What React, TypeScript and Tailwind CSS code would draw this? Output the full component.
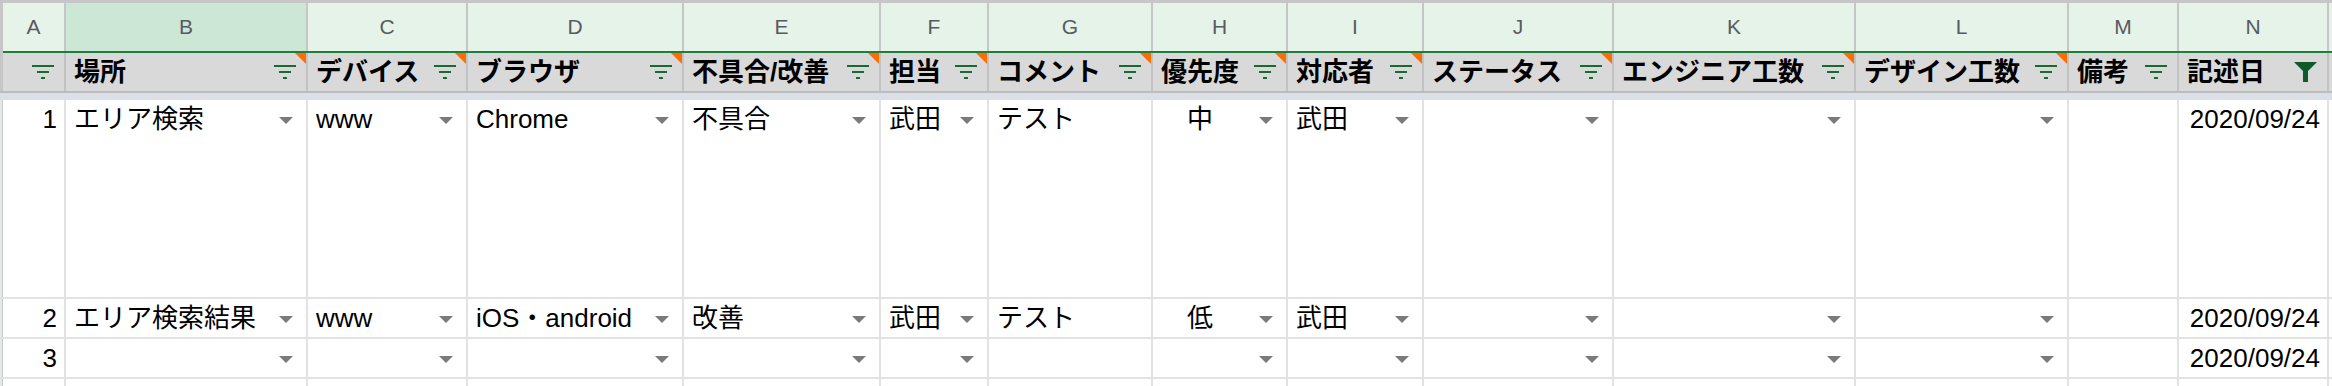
import React from "react";

type Col = { letter: string; w: string; head: string; flag: boolean };

const COLS: Col[] = [
  { letter: "A", w: "w-[63px]", head: "", flag: false },
  { letter: "B", w: "w-[242px]", head: "場所", flag: true },
  { letter: "C", w: "w-[160px]", head: "デバイス", flag: true },
  { letter: "D", w: "w-[216px]", head: "ブラウザ", flag: true },
  { letter: "E", w: "w-[197px]", head: "不具合/改善", flag: true },
  { letter: "F", w: "w-[108px]", head: "担当", flag: true },
  { letter: "G", w: "w-[164px]", head: "コメント", flag: true },
  { letter: "H", w: "w-[135px]", head: "優先度", flag: true },
  { letter: "I", w: "w-[136px]", head: "対応者", flag: true },
  { letter: "J", w: "w-[190px]", head: "ステータス", flag: true },
  { letter: "K", w: "w-[242px]", head: "エンジニア工数", flag: true },
  { letter: "L", w: "w-[213px]", head: "デザイン工数", flag: true },
  { letter: "M", w: "w-[110px]", head: "備考", flag: false },
  { letter: "N", w: "w-[150px]", head: "記述日", flag: false },
  { letter: "", w: "w-[200px]", head: "", flag: false },
];

const ARROW_COLS = new Set(["B", "C", "D", "E", "F", "H", "I", "J", "K", "L"]);

type RowData = { h: string; cells: Record<string, string> };

const ROWS: RowData[] = [
  {
    h: "h-[199px]",
    cells: { A: "1", B: "エリア検索", C: "www", D: "Chrome", E: "不具合", F: "武田", G: "テスト", H: "中", I: "武田", N: "2020/09/24" },
  },
  {
    h: "h-[40px]",
    cells: { A: "2", B: "エリア検索結果", C: "www", D: "iOS・android", E: "改善", F: "武田", G: "テスト", H: "低", I: "武田", N: "2020/09/24" },
  },
  { h: "h-[40px]", cells: { A: "3", N: "2020/09/24" } },
  { h: "h-[40px]", cells: { A: "4", N: "2020/09/24" } },
];

function FilterIcon() {
  return (
    <svg width="22" height="14" viewBox="0 0 22 14" className="shrink-0">
      <rect x="0" y="0" width="22" height="2" fill="#146c2e" />
      <rect x="5" y="6" width="12" height="2" fill="#146c2e" />
      <rect x="9" y="12" width="4" height="2" fill="#146c2e" />
    </svg>
  );
}

function FunnelIcon() {
  return (
    <svg width="23" height="20" viewBox="0 0 23 20" className="shrink-0">
      <path d="M0 0 H23 L14 9 V20 H9 V9 Z" fill="#0f5a29" />
    </svg>
  );
}

function Arrow() {
  return (
    <svg width="14" height="7" viewBox="0 0 14 7" className="shrink-0 mt-[2px]">
      <polygon points="0,0 14,0 7,7" fill="#7a7a7a" />
    </svg>
  );
}

function DataCell({ col, text }: { col: Col; text?: string }) {
  const arrow = ARROW_COLS.has(col.letter);
  const right = col.letter === "A" || col.letter === "N";
  const center = col.letter === "H";
  return (
    <div className={`${col.w} shrink-0 h-full border-r-2 border-[#e2e2e2]`}>
      <div className={`h-[38px] flex items-center ${right ? "pl-[6px] pr-[7px]" : "pl-[8px] pr-[13px]"}`}>
        <span
          className={`flex-1 whitespace-nowrap overflow-hidden text-[26px] leading-[30px] text-black ${
            right ? "text-right" : center ? "text-center pr-[20px]" : "text-left"
          }`}
        >
          {text ?? ""}
        </span>
        {arrow && <Arrow />}
      </div>
    </div>
  );
}

export default function App() {
  return (
    <div className="w-[2332px] h-[386px] overflow-hidden bg-white font-['Liberation_Sans','Noto_Sans_CJK_JP',sans-serif]">
      <div className="h-[3px] bg-[#c6c6c6]" />
      {/* column letters */}
      <div className="flex h-[48px]">
        <div className="w-[3px] shrink-0 bg-[#c6c6c6]" />
        {COLS.map((c, i) => (
          <div
            key={i}
            className={`${c.w} shrink-0 flex items-center justify-center border-r-2 border-[#c4c7c5] text-[21px] text-[#575b5f] ${
              c.letter === "B" ? "bg-[#cde7d7]" : "bg-[#e6f3e9]"
            }`}
          >
            {c.letter}
          </div>
        ))}
      </div>
      {/* green filter line */}
      <div className="flex h-[2px]">
        <div className="w-[3px] shrink-0 bg-[#c6c6c6]" />
        <div className="flex-1 bg-[#1e7e3a]" />
      </div>
      {/* header row */}
      <div className="flex h-[40px] border-b-2 border-[#bcbcbc] bg-[#d9d9d9]">
        <div className="w-[3px] shrink-0 bg-[#c6c6c6]" />
        {COLS.map((c, i) => (
          <div
            key={i}
            className={`${c.w} shrink-0 relative h-full flex items-center justify-between border-r-2 border-[#c2c2c2] pl-[8px] pr-[10px]`}
          >
            <span className="whitespace-nowrap text-[26px] leading-[30px] font-bold text-black">{c.head}</span>
            {c.letter === "N" ? <FunnelIcon /> : c.letter === "" ? null : <FilterIcon />}
            {c.flag && (
              <svg width="11" height="11" viewBox="0 0 11 11" className="absolute top-0 right-0">
                <polygon points="0,0 11,0 11,11" fill="#ff6d01" />
              </svg>
            )}
          </div>
        ))}
      </div>
      {/* frozen band */}
      <div className="h-[7px] bg-[#dbe0e8]" />
      {/* data rows */}
      {ROWS.map((r, i) => (
        <div key={i} className={`flex ${r.h} border-b-2 border-[#e2e2e2]`}>
          <div className="w-[3px] shrink-0 h-full bg-[#e4e9e5] border-r border-[#c8ccc8]" />
          {COLS.map((c, j) => (
            <DataCell key={j} col={c} text={c.letter ? r.cells[c.letter] : undefined} />
          ))}
        </div>
      ))}
    </div>
  );
}
